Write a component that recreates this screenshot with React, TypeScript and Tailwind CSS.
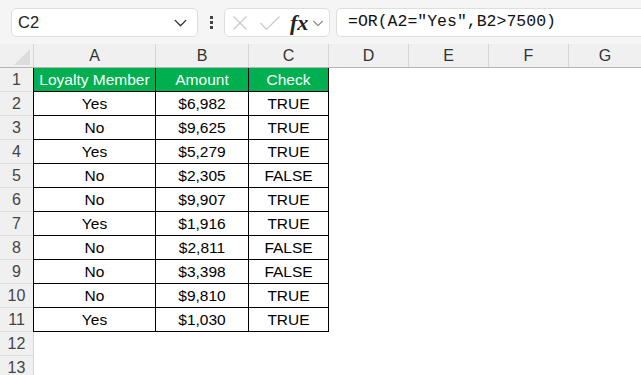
import React from 'react'

const rows = [
  ['Yes', '$6,982', 'TRUE'],
  ['No', '$9,625', 'TRUE'],
  ['Yes', '$5,279', 'TRUE'],
  ['No', '$2,305', 'FALSE'],
  ['No', '$9,907', 'TRUE'],
  ['Yes', '$1,916', 'TRUE'],
  ['No', '$2,811', 'FALSE'],
  ['No', '$3,398', 'FALSE'],
  ['No', '$9,810', 'TRUE'],
  ['Yes', '$1,030', 'TRUE'],
]

const font = { fontFamily: '"Liberation Sans", Arial, sans-serif' }

function ChevronDown({ size = 14, color = '#444' }: { size?: number; color?: string }) {
  return (
    <svg width={size} height={size} viewBox="0 0 16 16" fill="none">
      <path d="M3 6l5 5 5-5" stroke={color} strokeWidth="1.3" strokeLinecap="round" strokeLinejoin="round" />
    </svg>
  )
}

function FormulaBar() {
  return (
    <div className="flex items-center h-[44px] bg-[#f5f5f5] pl-[11px] pt-[1px]">
      <div className="flex items-center justify-between w-[187px] h-[29px] bg-white border border-[#dedede] rounded-[5px] pl-[6px] pr-[8px]">
        <span className="text-[16.5px] text-[#222]">C2</span>
        <ChevronDown size={17} color="#333" />
      </div>
      <div className="flex flex-col gap-[2px] items-center w-[26px]">
        <div className="w-[3px] h-[3px] bg-[#444]" />
        <div className="w-[3px] h-[3px] bg-[#444]" />
        <div className="w-[3px] h-[3px] bg-[#444]" />
      </div>
      <div className="flex items-center w-[106px] h-[29px] bg-white border border-[#dedede] rounded-[5px] pl-[7px]">
        <svg width="16" height="16" viewBox="0 0 16 16">
          <path d="M1.5 1.5l13 13M14.5 1.5l-13 13" stroke="#c8c8c8" strokeWidth="1.2" />
        </svg>
        <svg width="22" height="16" viewBox="0 0 22 16" className="ml-[11px]">
          <path d="M1.5 8l6 6.5L20.5 1.5" stroke="#c8c8c8" strokeWidth="1.2" fill="none" />
        </svg>
        <span
          className="ml-[9px] text-[22px] italic font-bold text-[#222] leading-none"
          style={{ fontFamily: '"Liberation Serif", "Times New Roman", serif' }}
        >
          fx
        </span>
        <span className="ml-[3px]">
          <ChevronDown size={14} color="#888" />
        </span>
      </div>
      <div className="flex items-center flex-1 h-[29px] ml-[6px] bg-white border border-r-0 border-[#dedede] rounded-l-[5px] pl-[11px]">
        <span className="text-[16.5px] text-[#111]" style={{ fontFamily: '"Liberation Mono", "Courier New", monospace' }}>
          =OR(A2="Yes",B2&gt;7500)
        </span>
      </div>
    </div>
  )
}

const colW = ['w-[122px]', 'w-[93px]', 'w-[80px]', 'w-[80px]', 'w-[80px]', 'w-[80px]', 'flex-1']
const letters = ['A', 'B', 'C', 'D', 'E', 'F', 'G']

function ColumnHeader() {
  return (
    <div className="flex h-[24px] bg-[#f0f0f0] border-b border-[#b5b5b5]">
      <div className="relative w-[34px] h-full border-r border-[#d6d6d6]">
        <div
          className="absolute left-[14px] top-[5px] w-[16px] h-[16px] bg-[#dcdcdc]"
          style={{ clipPath: 'polygon(100% 0, 100% 100%, 0 100%)' }}
        />
      </div>
      {letters.map((l, i) => (
        <div
          key={l}
          className={`${colW[i]} h-full flex items-center justify-center text-[16px] text-[#333] ${i < 6 ? 'border-r border-[#d6d6d6]' : ''}`}
        >
          {l}
        </div>
      ))}
    </div>
  )
}

function RowNum({ n }: { n: number }) {
  return (
    <div className="w-[33px] h-full flex items-center justify-center bg-[#f0f0f0] border-b border-[#dcdcdc] text-[16px] text-[#444]">
      {n}
    </div>
  )
}

export default function App() {
  return (
    <div className="w-[641px] h-[375px] overflow-hidden bg-white" style={font}>
      <FormulaBar />
      <ColumnHeader />
      <div className="flex h-[24px]">
        <RowNum n={1} />
        <div className="flex bg-[#00b050] text-white text-[15.5px] border-l border-b border-black h-full">
          <div className="w-[122px] flex items-center justify-center border-r border-black">Loyalty Member</div>
          <div className="w-[93px] flex items-center justify-center border-r border-black">Amount</div>
          <div className="w-[80px] flex items-center justify-center border-r border-black">Check</div>
        </div>
      </div>
      {rows.map((r, i) => (
        <div key={i} className="flex h-[24px]">
          <RowNum n={i + 2} />
          <div className="flex text-black text-[15.5px] border-l border-b border-black h-full">
            <div className="w-[122px] flex items-center justify-center border-r border-black">{r[0]}</div>
            <div className="w-[93px] flex items-center justify-center border-r border-black">{r[1]}</div>
            <div className="w-[80px] flex items-center justify-center border-r border-black">{r[2]}</div>
          </div>
        </div>
      ))}
      {[12, 13].map((n) => (
        <div key={n} className="flex h-[24px]">
          <div className="w-[34px] h-full border-r border-[#d6d6d6] flex">
            <RowNum n={n} />
          </div>
        </div>
      ))}
    </div>
  )
}
